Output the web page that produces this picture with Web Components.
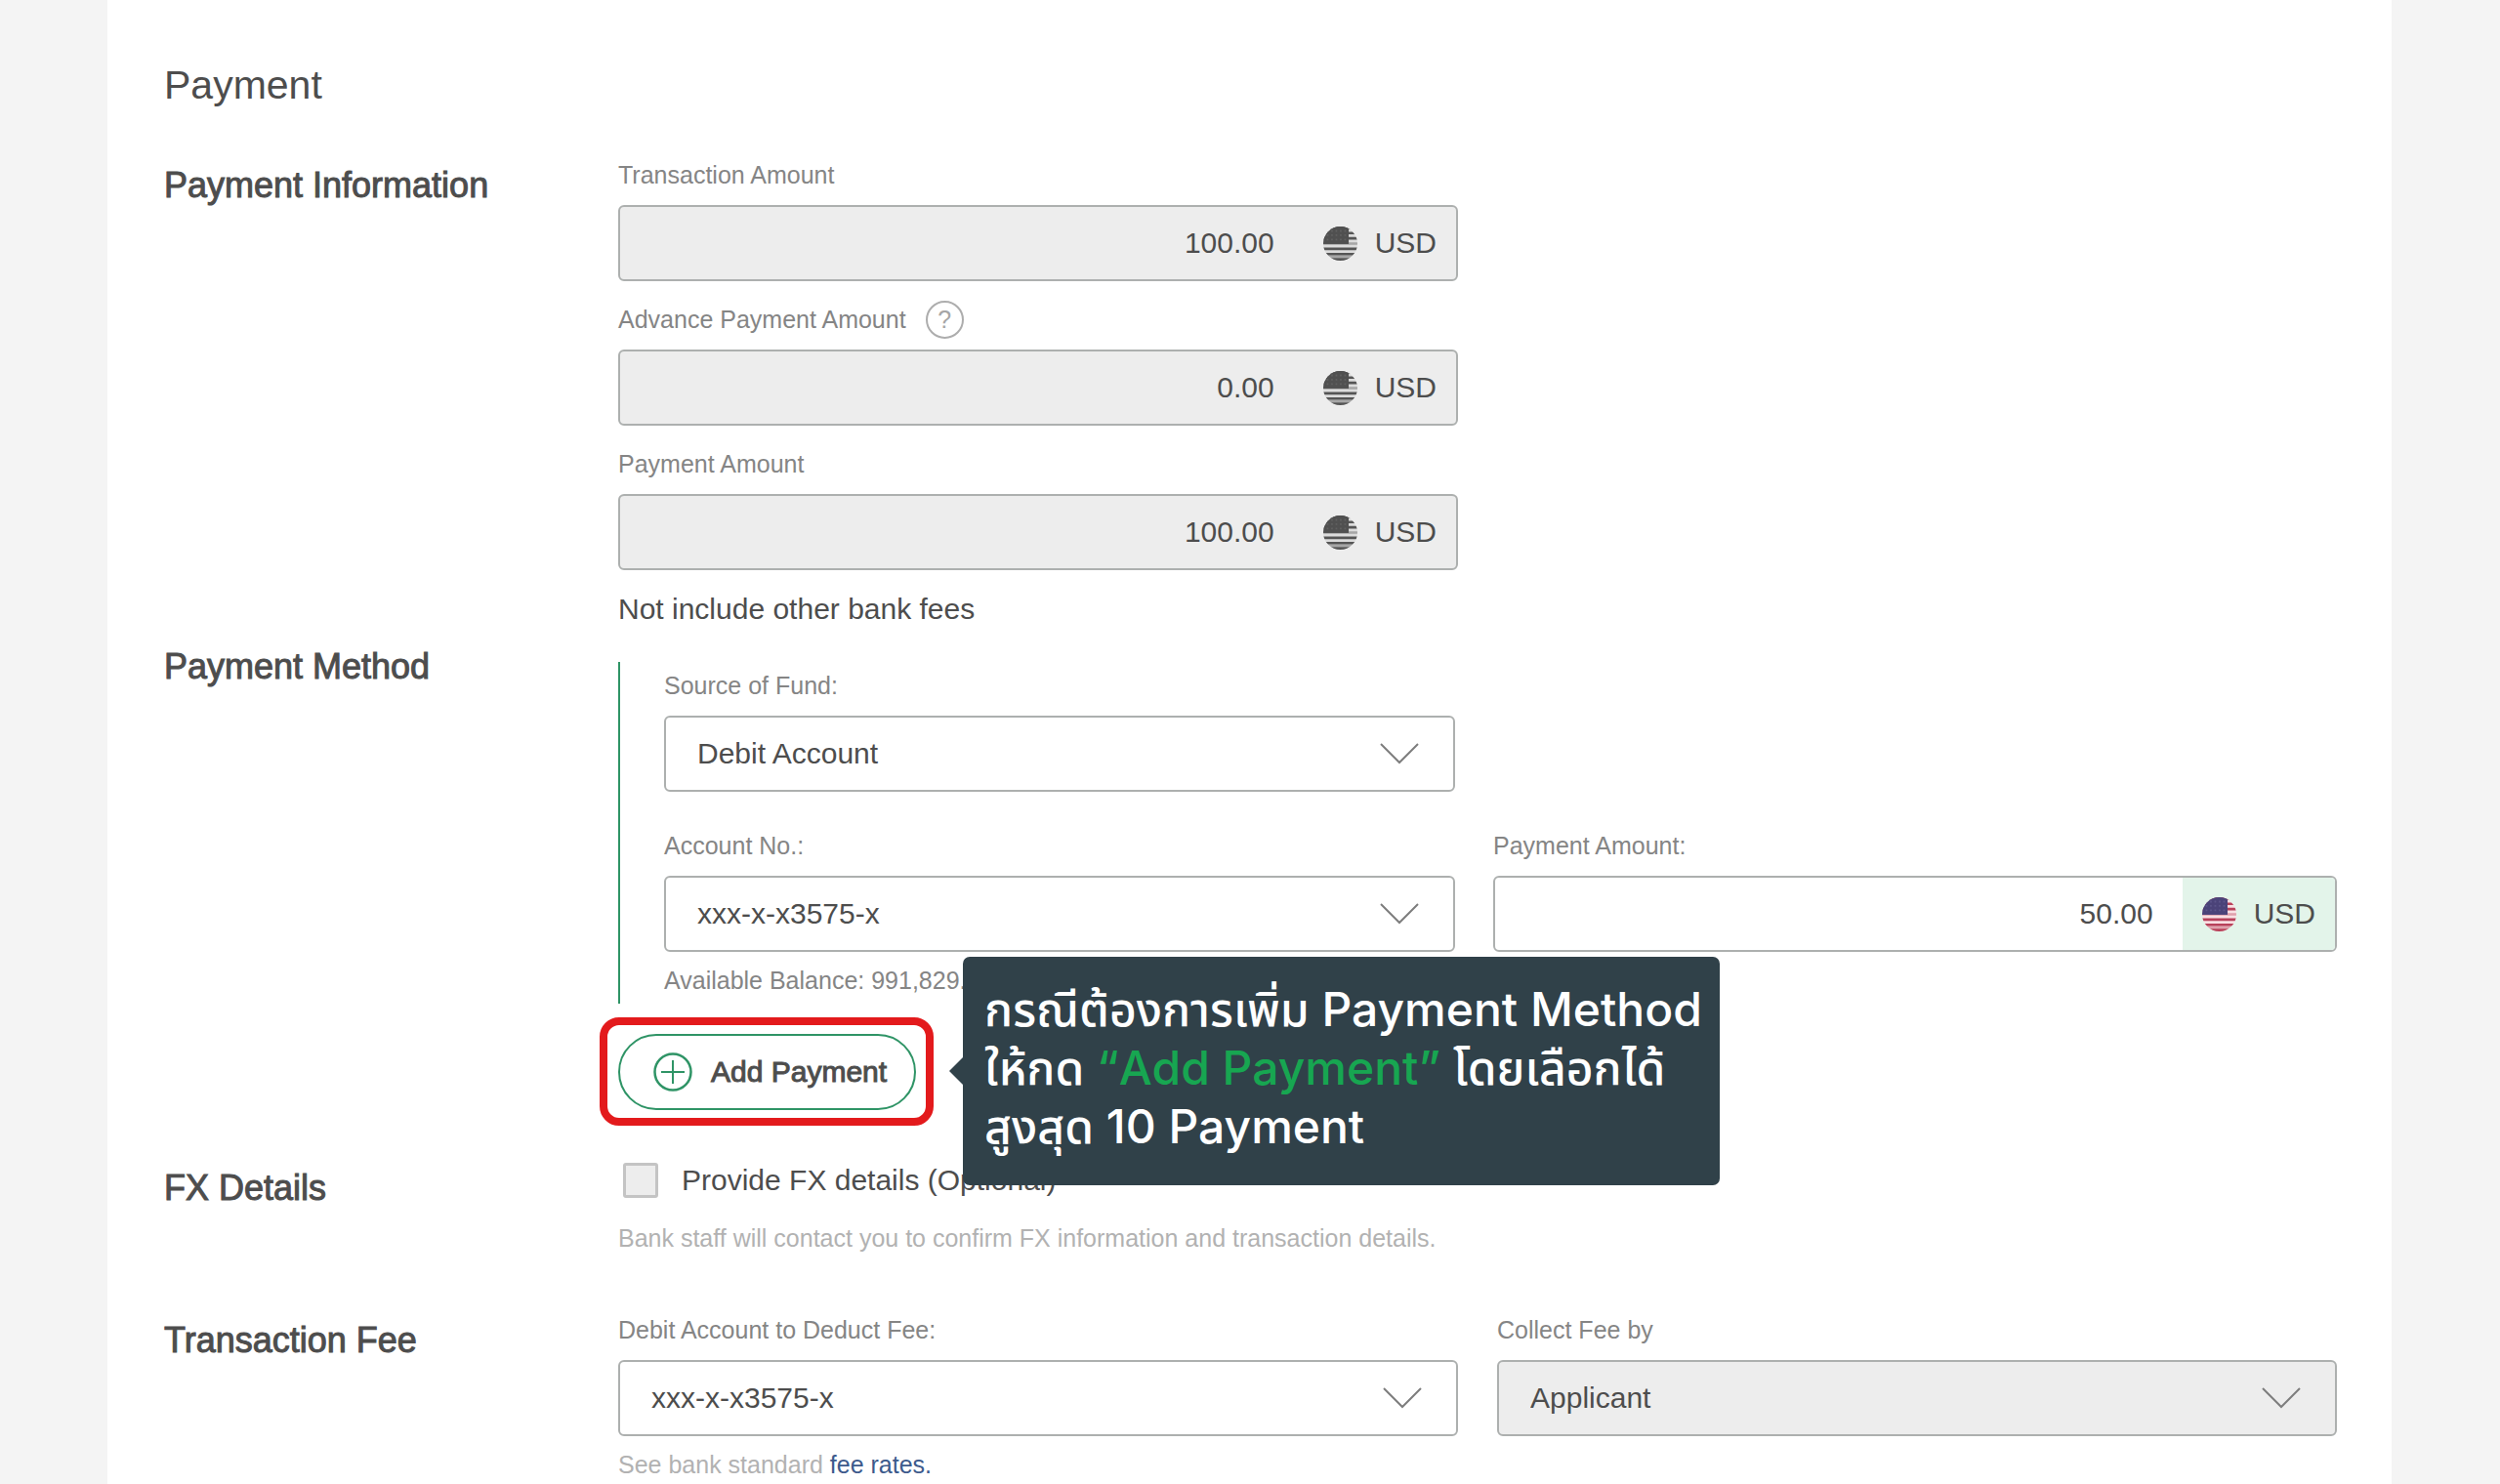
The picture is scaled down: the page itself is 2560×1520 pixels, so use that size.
<!DOCTYPE html>
<html lang="en">
<head>
<meta charset="utf-8">
<title>Payment</title>
<style>
    html {
        --ink: #4d4d4d;
        --label: #858585;
        --muted: #b2b2b2;
        --line: #adb0af;
        --locked: #ededed;
        --green: #2f9466;
        --mint: #e3f4ea;
    }
    body {
        margin: 0;
        min-height: 100vh;
        background: #f4f4f4;
        color: var(--ink);
        font-family: "Liberation Sans", Arial, sans-serif;
        font-size: 30px;
        line-height: 36px;
    }
    .muted {
        color: var(--muted);
    }
    a {
        color: #3c5a8c;
        text-decoration: none;
    }
    em {
        color: #17a651;
        font-style: normal;
    }
    .note {
        margin: 22px 0 0;
    }
    .after-check {
        margin: 26px 0 0;
        color: var(--muted);
        font-size: 25px;
        line-height: 30px;
    }
</style>
</head>
<body>
    <payment-sheet title="Payment">
        <payment-section heading="Payment Information" gap="52">
            <field-row>
                <amount-field label="Transaction Amount" value="100.00" locked></amount-field>
            </field-row>
            <field-row gap="24">
                <amount-field label="Advance Payment Amount" value="0.00" locked help></amount-field>
            </field-row>
            <field-row gap="24">
                <amount-field label="Payment Amount" value="100.00" locked></amount-field>
            </field-row>
            <p class="note">Not include other bank fees</p>
        </payment-section>

        <payment-section heading="Payment Method" gap="15">
            <method-group>
                <field-row nested>
                    <select-field label="Source of Fund:" value="Debit Account"></select-field>
                </field-row>
                <field-row nested gap="26">
                    <select-field label="Account No.:" value="xxx-x-x3575-x">
                        <span slot="hint">Available Balance: 991,829.</span>
                    </select-field>
                    <amount-field label="Payment Amount:" value="50.00"></amount-field>
                </field-row>
            </method-group>
            <add-button>
                Add Payment
                <call-out slot="tip">กรณีต้องการเพิ่ม Payment Method<br>ให้กด <em>“Add Payment”</em> โดยเลือกได้<br>สูงสุด 10 Payment</call-out>
            </add-button>
        </payment-section>

        <payment-section heading="FX Details" gap="54">
            <check-field>Provide FX details (Optional)</check-field>
            <p class="after-check">Bank staff will contact you to confirm FX information and transaction details.</p>
        </payment-section>

        <payment-section heading="Transaction Fee" gap="64">
            <field-row>
                <select-field label="Debit Account to Deduct Fee:" value="xxx-x-x3575-x">
                    <span slot="hint" class="muted">See bank standard <a href="#">fee rates.</a></span>
                </select-field>
                <select-field label="Collect Fee by" value="Applicant" locked></select-field>
            </field-row>
        </payment-section>
    </payment-sheet>

<script>
    // label and box styles shared by the fields
    const fieldStyles = `
        :host {
            display: block;
            min-width: 0;
        }
        * {
            box-sizing: border-box;
        }
        .label {
            display: flex;
            align-items: center;
            gap: 20px;
            height: 30px;
            margin-bottom: 16px;
            color: var(--label);
            font-size: 25px;
            line-height: 30px;
        }
        .box {
            height: 78px;
            border: 2px solid var(--line);
            border-radius: 6px;
            background: #fff;
            overflow: hidden;
        }
        :host([locked]) .box {
            background: var(--locked);
        }
        input, select {
            width: 100%;
            min-width: 0;
            margin: 0;
            border: 0;
            outline: 0;
            background: transparent;
            color: var(--ink);
            opacity: 1;
            font: inherit;
        }
    `;

    class BaseElement extends HTMLElement {
        constructor() {
            super();
            this.attachShadow({ mode: 'open' });
        }
        connectedCallback() {
            const template = document.createElement('template');
            template.innerHTML = `<style>${this.getStyles()}</style>${this.getTemplate()}`;
            this.shadowRoot.replaceChildren(template.content.cloneNode(true));
        }
    }

    class PaymentSheet extends BaseElement {
        getStyles() {
            return `
                :host {
                    display: block;
                    box-sizing: border-box;
                    min-height: 100vh;
                    margin: 0 111px 0 110px;
                    padding: 62px 56px 0 58px;
                    background: #fff;
                }
                h1 {
                    margin: 0;
                    font-size: 41px;
                    font-weight: 400;
                    line-height: 50px;
                }
            `;
        }
        getTemplate() {
            return `<h1>${this.getAttribute('title')}</h1><slot></slot>`;
        }
    }

    class PaymentSection extends BaseElement {
        getStyles() {
            return `
                :host {
                    display: block;
                    padding-top: ${this.getAttribute('gap')}px;
                }
                section {
                    display: grid;
                    grid-template-columns: 465px minmax(0, 1fr);
                }
                h2 {
                    margin: 4px 0 0;
                    font-size: 36px;
                    font-weight: 400;
                    line-height: 44px;
                    -webkit-text-stroke: 1px currentColor;
                }
            `;
        }
        getTemplate() {
            return `
                <section>
                    <h2>${this.getAttribute('heading')}</h2>
                    <div><slot></slot></div>
                </section>
            `;
        }
    }

    class FieldRow extends BaseElement {
        getStyles() {
            return `
                :host {
                    display: grid;
                    grid-template-columns: minmax(0, 1fr) minmax(0, 1fr);
                    column-gap: 40px;
                    margin-top: ${this.getAttribute('gap') || 0}px;
                }
                :host([nested]) {
                    grid-template-columns: minmax(0, 15fr) minmax(0, 16fr);
                    column-gap: 39px;
                }
            `;
        }
        getTemplate() {
            return `<slot></slot>`;
        }
    }

    class MethodGroup extends BaseElement {
        getStyles() {
            return `
                :host {
                    display: block;
                    margin-top: 21px;
                    padding: 9px 0 9px 45px;
                    border-left: 2px solid var(--green);
                }
            `;
        }
        getTemplate() {
            return `<slot></slot>`;
        }
    }

    class UsFlag extends BaseElement {
        getStyles() {
            return `
                :host {
                    display: block;
                    width: 35px;
                    height: 35px;
                    --stripe: #b8415a;
                    --field: #f9dfe3;
                    --canton: #4b4379;
                    --star: #5c558a;
                }
                :host([gray]) {
                    --stripe: #565656;
                    --field: #dcdcdc;
                    --canton: #505050;
                    --star: #606060;
                }
                svg {
                    display: block;
                }
            `;
        }
        getTemplate() {
            return `
                <svg width="35" height="35" viewBox="0 0 39 39" aria-hidden="true">
                    <clipPath id="round"><circle cx="19.5" cy="19.5" r="19.5"/></clipPath>
                    <g clip-path="url(#round)">
                        <rect width="39" height="39" fill="var(--field)"/>
                        <path d="M0 1.5h39M0 7.5h39M0 13.5h39M0 25.5h39M0 31.5h39M0 37.5h39" stroke="var(--stripe)" stroke-width="3"/>
                        <path d="M0 19.5h39M0 34.5h39" stroke="var(--stripe)" stroke-width="3" opacity=".4"/>
                        <rect width="29" height="20" fill="var(--canton)"/>
                        <path d="M4 5h24M4 10h24M4 15h24" stroke="var(--star)" stroke-width="2" stroke-dasharray="2 3"/>
                    </g>
                </svg>
            `;
        }
    }

    class HelpIcon extends BaseElement {
        getStyles() {
            return `
                :host {
                    display: block;
                }
                button {
                    display: block;
                    box-sizing: border-box;
                    width: 39px;
                    height: 39px;
                    padding: 0;
                    border: 2px solid #adadad;
                    border-radius: 50%;
                    background: #fff;
                    color: #a6a6a6;
                    font: inherit;
                    line-height: 35px;
                }
            `;
        }
        getTemplate() {
            return `<button type="button">?</button>`;
        }
    }

    class AmountField extends BaseElement {
        getStyles() {
            return `
                ${fieldStyles}
                .box {
                    display: flex;
                }
                input {
                    flex: 1;
                    padding: 0 30px;
                    text-align: right;
                }
                .currency {
                    display: flex;
                    align-items: center;
                    gap: 18px;
                    padding: 0 20px;
                    background: var(--mint);
                }
                :host([locked]) .currency {
                    background: none;
                }
            `;
        }
        getTemplate() {
            const locked = this.hasAttribute('locked');
            return `
                <div class="label">
                    <label for="amount">${this.getAttribute('label')}</label>
                    ${this.hasAttribute('help') ? '<help-icon></help-icon>' : ''}
                </div>
                <div class="box">
                    <input id="amount" type="text" value="${this.getAttribute('value')}" ${locked ? 'readonly' : ''}>
                    <div class="currency"><us-flag ${locked ? 'gray' : ''}></us-flag><span>USD</span></div>
                </div>
            `;
        }
    }

    class SelectField extends BaseElement {
        getStyles() {
            return `
                ${fieldStyles}
                .box {
                    display: grid;
                    align-items: center;
                }
                select, svg {
                    grid-area: 1 / 1;
                }
                select {
                    height: 100%;
                    padding: 0 80px 0 32px;
                    appearance: none;
                }
                svg {
                    justify-self: end;
                    margin-right: 35px;
                    pointer-events: none;
                }
                slot {
                    display: block;
                    margin-top: 14px;
                    color: var(--label);
                    font-size: 25px;
                    line-height: 30px;
                    white-space: nowrap;
                }
            `;
        }
        getTemplate() {
            return `
                <label class="label" for="choice">${this.getAttribute('label')}</label>
                <div class="box">
                    <select id="choice" ${this.hasAttribute('locked') ? 'disabled' : ''}>
                        <option>${this.getAttribute('value')}</option>
                    </select>
                    <svg width="40" height="22" viewBox="0 0 40 22" fill="none" stroke="#7d7d7d" stroke-width="2" aria-hidden="true">
                        <path d="M1 1l19 19L39 1"/>
                    </svg>
                </div>
                <slot name="hint"></slot>
            `;
        }
    }

    class CheckField extends BaseElement {
        getStyles() {
            return `
                :host {
                    display: block;
                }
                label {
                    display: flex;
                    align-items: center;
                    gap: 24px;
                    padding-left: 5px;
                }
                input {
                    box-sizing: border-box;
                    width: 36px;
                    height: 36px;
                    margin: 0;
                    border: 3px solid #c4c4c4;
                    border-radius: 3px;
                    background: var(--locked);
                    appearance: none;
                }
            `;
        }
        getTemplate() {
            return `<label><input type="checkbox"><span><slot></slot></span></label>`;
        }
    }

    class AddButton extends BaseElement {
        getStyles() {
            return `
                :host {
                    display: block;
                    position: relative;
                    width: max-content;
                    margin-top: 31px;
                }
                /* red frame round the button */
                :host::before {
                    content: "";
                    position: absolute;
                    inset: -17px -18px -16px -19px;
                    border: 8px solid #e31a1c;
                    border-radius: 20px;
                    pointer-events: none;
                }
                button {
                    display: flex;
                    align-items: center;
                    gap: 19px;
                    height: 78px;
                    padding: 0 28px 0 34px;
                    border: 2px solid var(--green);
                    border-radius: 39px;
                    background: #fff;
                    color: var(--ink);
                    font: inherit;
                    -webkit-text-stroke: 1px currentColor;
                }
                .tip {
                    position: absolute;
                    left: calc(100% + 48px);
                    top: -79px;
                    z-index: 1;
                }
            `;
        }
        getTemplate() {
            return `
                <button type="button">
                    <svg width="40" height="40" viewBox="0 0 40 40" fill="none" stroke="#2f9466" stroke-width="2" aria-hidden="true">
                        <circle cx="20" cy="20" r="18.5" stroke-width="2.5"/>
                        <path d="M8 20h24M20 8v24"/>
                    </svg>
                    <span><slot></slot></span>
                </button>
                <div class="tip"><slot name="tip"></slot></div>
            `;
        }
    }

    class CallOut extends BaseElement {
        getStyles() {
            return `
                :host {
                    display: block;
                    position: relative;
                    box-sizing: border-box;
                    width: 775px;
                    height: 234px;
                    padding: 24px 22px;
                    border-radius: 7px;
                    background: #304149;
                    color: #fff;
                    font-family: Inter, "Noto Sans Thai", "Noto Sans", sans-serif;
                    font-size: 48px;
                    font-weight: 500;
                    line-height: 60px;
                    white-space: nowrap;
                }
                :host::before {
                    content: "";
                    position: absolute;
                    left: -14px;
                    top: 103px;
                    border: 14px solid transparent;
                    border-left: 0;
                    border-right-color: #304149;
                }
            `;
        }
        getTemplate() {
            return `<slot></slot>`;
        }
    }

    customElements.define('payment-sheet', PaymentSheet);
    customElements.define('payment-section', PaymentSection);
    customElements.define('field-row', FieldRow);
    customElements.define('method-group', MethodGroup);
    customElements.define('us-flag', UsFlag);
    customElements.define('help-icon', HelpIcon);
    customElements.define('amount-field', AmountField);
    customElements.define('select-field', SelectField);
    customElements.define('check-field', CheckField);
    customElements.define('add-button', AddButton);
    customElements.define('call-out', CallOut);
</script>
</body>
</html>
